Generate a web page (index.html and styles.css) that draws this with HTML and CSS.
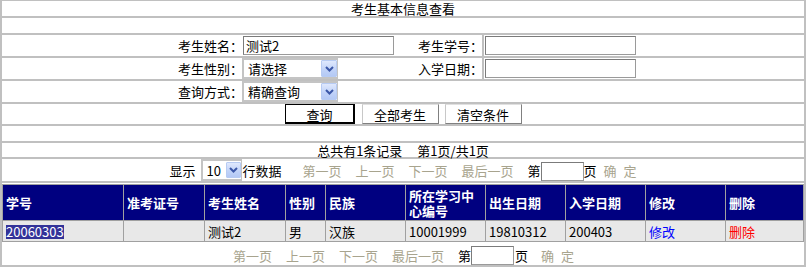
FILE: index.html
```html
<!DOCTYPE html>
<html lang="zh-CN">
<head>
<meta charset="utf-8">
<title>考生基本信息查看</title>
<link rel="stylesheet" href="styles.css">
</head>
<body>
<div class="frame">
  <div class="row r-title">考生基本信息查看</div>
  <div class="row r-blank"></div>

  <div class="grid3 r-form1">
    <div class="cell lab">考生姓名：</div>
    <div class="cell mid"><span class="textbox">测试2</span><span class="lab2">考生学号：</span></div>
    <div class="cell last"><span class="textbox"></span></div>
  </div>

  <div class="grid3 r-form2">
    <div class="cell lab">考生性别：</div>
    <div class="cell mid nopad">
      <span class="combo w96"><span class="combo-text">请选择</span><span class="combo-btn"><svg width="9" height="6" viewBox="0 0 9 6"><path d="M1 1L4.5 4.5L8 1" fill="none" stroke="#3b57a8" stroke-width="2"/></svg></span></span>
      <span class="lab2">入学日期：</span>
    </div>
    <div class="cell last"><span class="textbox"></span></div>
  </div>

  <div class="grid2 r-form3">
    <div class="cell lab">查询方式：</div>
    <div class="cell last nopad">
      <span class="combo w96"><span class="combo-text">精确查询</span><span class="combo-btn"><svg width="9" height="6" viewBox="0 0 9 6"><path d="M1 1L4.5 4.5L8 1" fill="none" stroke="#3b57a8" stroke-width="2"/></svg></span></span>
    </div>
  </div>

  <div class="row r-buttons">
    <button class="btn btn-default">查询</button>
    <button class="btn btn-all">全部考生</button>
    <button class="btn btn-clear">清空条件</button>
  </div>

  <div class="row r-blank"></div>

  <div class="row r-summary"><span>总共有1条记录</span><span class="pageinfo">第1页/共1页</span></div>

  <div class="row r-pager">
    <span>显示</span>
    <span class="combo w41 m6"><span class="combo-text num">10</span><span class="combo-btn"><svg width="9" height="6" viewBox="0 0 9 6"><path d="M1 1L4.5 4.5L8 1" fill="none" stroke="#3b57a8" stroke-width="2"/></svg></span></span>
    <span>行数据</span>
    <a class="dis m21">第一页</a>
    <a class="dis m14">上一页</a>
    <a class="dis m14">下一页</a>
    <a class="dis m14">最后一页</a>
    <span class="m14">第</span><span class="pagebox"></span><span>页</span>
    <a class="dis ok m7">确 定</a>
  </div>

  <div class="row r-data">
    <table class="list">
      <colgroup>
        <col class="c1"><col class="c2"><col class="c3"><col class="c4"><col class="c5">
        <col class="c6"><col class="c7"><col class="c8"><col class="c9"><col class="c10">
      </colgroup>
      <thead>
        <tr><th>学号</th><th>准考证号</th><th>考生姓名</th><th>性别</th><th>民族</th><th>所在学习中心编号</th><th>出生日期</th><th>入学日期</th><th>修改</th><th>删除</th></tr>
      </thead>
      <tbody>
        <tr><td><span class="sel">20060303</span></td><td></td><td>测试2</td><td>男</td><td>汉族</td><td>10001999</td><td>19810312</td><td>200403</td><td><a class="edit">修改</a></td><td><a class="del">删除</a></td></tr>
      </tbody>
    </table>
    <div class="pager2">
      <a class="dis">第一页</a>
      <a class="dis m14">上一页</a>
      <a class="dis m14">下一页</a>
      <a class="dis m14">最后一页</a>
      <span class="m14">第</span><span class="pagebox"></span><span class="m1">页</span>
      <a class="dis ok m13">确 定</a>
    </div>
  </div>
</div>
</body>
</html>
```
FILE: styles.css
```css
* { box-sizing: border-box; }
html, body { margin: 0; padding: 0; background: #fff; }
body {
  font-family: "SimSun", "Noto Sans CJK SC", sans-serif;
  font-size: 13px;
  color: #000;
  line-height: 15px;
}

.frame {
  width: 806px;
  background: #c0c0c0;
  padding: 1px 2px 2px 2px;
  display: flex;
  flex-direction: column;
  gap: 2px;
}

.row {
  background: #fff;
  display: flex;
  align-items: center;
  justify-content: center;
}
.r-title { height: 15px; }
.r-blank { height: 15px; }
.r-buttons { height: 20px; }
.r-summary { height: 14px; }
.r-pager { height: 22px; align-items: stretch; }
.r-pager > span, .r-pager > a { display: flex; align-items: center; }
.r-data { height: 82px; flex-direction: column; justify-content: flex-start; align-items: stretch; }

.grid3 { display: grid; grid-template-columns: 238px 240px 1fr; gap: 2px; }
.grid2 { display: grid; grid-template-columns: 238px 1fr; gap: 2px; }
.r-form1 { height: 21px; }
.r-form2 { height: 21px; }
.r-form3 { height: 21px; }

.cell { background: #fff; padding: 1px; display: flex; align-items: center; }
.cell.nopad { padding: 0 1px 0 0; }
.cell.lab { justify-content: flex-end; padding-right: 0; margin-right: -3px; }
.cell.mid { justify-content: space-between; padding-right: 0; }
.lab2 { margin-right: -1px; }

.textbox {
  display: inline-flex;
  align-items: center;
  width: 151px;
  height: 19px;
  border: 1px solid #7b7b7b;
  border-right-color: #9a9a9a;
  border-bottom-color: #9a9a9a;
  padding-left: 2px;
  background: #fff;
}

.combo {
  display: inline-flex;
  align-items: center;
  justify-content: space-between;
  height: 100%;
  border: 2px solid #c4c4c4;
  border-right-width: 1px;
  background: #fff;
  padding: 0 0 0 4px;
}
.w96 { width: 96px; }
.w41 { width: 41px; padding-left: 3px; }
.combo-btn {
  width: 16px;
  height: 17px;
  border: 1px solid #b7cbf3;
  border-radius: 1px;
  background: linear-gradient(#dfe8fd, #c0d2f8 60%, #b4c9f5);
  display: flex;
  align-items: center;
  justify-content: center;
}
.r-pager .combo { height: 22px; }
.r-pager .combo-btn { height: 16px; width: 15px; }

.btn {
  font: inherit;
  height: 20px;
  background: #fff;
  color: #000;
  padding: 0;
  margin: 0;
  line-height: 15px;
}
.btn-default { width: 70px; border: 1px solid #000; box-shadow: inset -1px -1px 0 #000, inset 1px 1px 0 #fff; }
.btn-all { width: 77px; margin-left: 7px; border: 1px solid; border-color: #e0e0e0 #808080 #808080 #c8c8c8; }
.btn-clear { width: 77px; margin-left: 6px; border: 1px solid; border-color: #e0e0e0 #808080 #808080 #c8c8c8; }

.pageinfo { margin-left: 15px; }

.dis { color: #a8a48e; text-decoration: none; }
.ok { word-spacing: 4px; }
.m1 { margin-left: 1px; }
.m6 { margin-left: 6px; margin-right: 0; }
.m7 { margin-left: 7px; }
.m13 { margin-left: 13px; }
.m14 { margin-left: 14px; }
.m21 { margin-left: 21px; }

.pagebox {
  width: 43px;
  border: 1px solid #7b7b7b;
  border-right-color: #9a9a9a;
  border-bottom-color: #9a9a9a;
  background: #fff;
}
.r-pager .pagebox { height: 19px; align-self: flex-end; margin-bottom: 0; }

.list {
  margin-top: 1px;
  width: 802px;
  table-layout: fixed;
  border-collapse: separate;
  border-spacing: 1px;
  background: #a0a0a0;
}
.c1 { width: 120px; }
.c2, .c3 { width: 80px; }
.c4 { width: 39px; }
.c5, .c6, .c7, .c8, .c9 { width: 79px; }
.c10 { width: 77px; }
.list th {
  background: #000080;
  color: #fff;
  font-weight: bold;
  text-align: left;
  height: 35px;
  padding: 0 2px 0 3px;
  line-height: 15px;
  vertical-align: middle;
}
.list td {
  background: #e8e8e8;
  height: 20px;
  padding: 0 2px 0 3px;
  line-height: 15px;
  vertical-align: middle;
}
.sel { background: #333399; color: #fff; display: inline-block; line-height: 14px; }
.edit { color: #0000ff; text-decoration: none; }
.del { color: #ff0000; text-decoration: none; }

.pager2 {
  flex: 1;
  display: flex;
  justify-content: center;
  align-items: flex-end;
  padding-left: 1px;
}
.pager2 > a, .pager2 > span { height: 19px; display: flex; align-items: center; }
.pager2 .pagebox { height: 19px; }
```
